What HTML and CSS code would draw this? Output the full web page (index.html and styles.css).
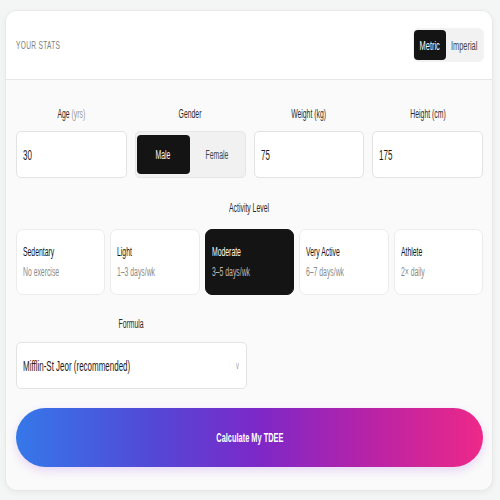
FILE: index.html
```html
<!DOCTYPE html>
<html>
<head>
<meta charset="utf-8">
<link rel="stylesheet" href="styles.css">
</head>
<body>
<div class="page">
  <div class="card">
    <div class="card-head">
      <div class="title"><span class="n">YOUR STATS</span></div>
      <div class="units">
        <span class="unit u-metric active"><span class="nc">Metric</span></span>
        <span class="unit u-imp"><span class="nc">Imperial</span></span>
      </div>
    </div>
    <div class="card-body">
      <div class="fields">
        <div class="field">
          <div class="label"><span class="nc">Age <span class="muted">(yrs)</span></span></div>
          <div class="input"><span class="n">30</span></div>
        </div>
        <div class="field">
          <div class="label"><span class="nc">Gender</span></div>
          <div class="seg">
            <span class="seg-btn active"><span class="nc">Male</span></span>
            <span class="seg-btn"><span class="nc">Female</span></span>
          </div>
        </div>
        <div class="field">
          <div class="label"><span class="nc">Weight (kg)</span></div>
          <div class="input"><span class="n">75</span></div>
        </div>
        <div class="field">
          <div class="label"><span class="nc">Height (cm)</span></div>
          <div class="input"><span class="n">175</span></div>
        </div>
      </div>

      <div class="activity">
        <div class="label label-act"><span class="nc">Activity Level</span></div>
        <div class="acts">
          <div class="act"><div class="act-t"><span class="n">Sedentary</span></div><div class="act-s"><span class="n">No exercise</span></div></div>
          <div class="act"><div class="act-t"><span class="n">Light</span></div><div class="act-s"><span class="n">1–3 days/wk</span></div></div>
          <div class="act active"><div class="act-t"><span class="n">Moderate</span></div><div class="act-s"><span class="n">3–5 days/wk</span></div></div>
          <div class="act"><div class="act-t"><span class="n">Very Active</span></div><div class="act-s"><span class="n">6–7 days/wk</span></div></div>
          <div class="act"><div class="act-t"><span class="n">Athlete</span></div><div class="act-s"><span class="n">2× daily</span></div></div>
        </div>
      </div>

      <div class="formula">
        <div class="label label-form"><span class="nc">Formula</span></div>
        <div class="select">
          <span class="n">Mifflin-St Jeor (recommended)</span>
          <span class="chev"><span class="nc">v</span></span>
        </div>
      </div>

      <div class="cta"><span class="nc">Calculate My TDEE</span></div>
    </div>
  </div>
</div>
</body>
</html>
```
FILE: styles.css
```css
* { box-sizing: border-box; }
html, body { margin: 0; padding: 0; }
body {
  background: #f4f5f5;
  font-family: "Liberation Sans", Arial, sans-serif;
  color: #111;
  width: 500px;
  height: 500px;
  overflow: hidden;
}
.n, .nc {
  display: inline-block;
  white-space: nowrap;
  transform: scaleX(0.57);
}
.n { transform-origin: left center; }
.nc { transform-origin: center center; }

.page { padding: 10px 7px 0 5px; }
.card {
  background: #fafafa;
  border: 1px solid #e8e8e8;
  border-radius: 12px;
  overflow: hidden;
  height: 481px;
  box-shadow: 0 2px 6px rgba(0,0,0,0.05);
}
.card-head {
  background: #fff;
  height: 69px;
  border-bottom: 1px solid #e6e6e6;
  display: flex;
  align-items: center;
  justify-content: space-between;
  padding: 0 8px 0 10px;
}
.title {
  font-size: 11.5px;
  letter-spacing: 0.6px;
  color: #7d7d7d;
}
.units {
  display: flex;
  background: #f2f2f2;
  border-radius: 6px;
  padding: 2px 1px;
}
.unit {
  display: flex;
  align-items: center;
  justify-content: center;
  font-size: 13px;
  color: #444;
  height: 30px;
  border-radius: 4px;
}
.u-metric { width: 32px; }
.u-imp { width: 37px; }
.unit.active { background: #141414; color: #fff; }

.card-body { padding: 28px 9px 0 10px; }
.label {
  text-align: center;
  font-size: 12px;
  color: #2a2a2a;
  line-height: 13px;
}
.muted { color: #999; }
.fields {
  display: grid;
  grid-template-columns: repeat(4, 1fr);
  gap: 8px;
}
.field .label { margin-bottom: 10px; }
.input {
  height: 47px;
  background: #fff;
  border: 1px solid #e3e3e3;
  border-radius: 5px;
  display: flex;
  align-items: center;
  padding-left: 6px;
  font-size: 14px;
  color: #1a1a1a;
}
.seg {
  height: 47px;
  background: #f1f1f1;
  border: 1px solid #e6e6e6;
  border-radius: 5px;
  display: flex;
  padding: 3px 1px;
}
.seg-btn {
  flex: 1;
  display: flex;
  align-items: center;
  justify-content: center;
  font-size: 12px;
  color: #444;
  border-radius: 4px;
}
.seg-btn.active { background: #141414; color: #fff; }

.activity { margin-top: 24px; }
.label-act { margin-bottom: 14px; }
.acts {
  display: grid;
  grid-template-columns: repeat(5, 1fr);
  gap: 5px;
}
.act {
  height: 66px;
  background: #fff;
  border: 1px solid #ececec;
  border-radius: 7px;
  padding: 15px 6px 0;
}
.act-t { font-size: 12px; color: #111; line-height: 14px; }
.act-s { font-size: 12px; color: #8a8a8a; line-height: 14px; margin-top: 6px; }
.act.active { background: #141414; border-color: #141414; }
.act.active .act-t { color: #fff; }
.act.active .act-s { color: #bdbdbd; }

.formula { margin-top: 23px; width: 231px; }
.label-form { margin-bottom: 11px; }
.select {
  height: 47px;
  background: #fff;
  border: 1px solid #e3e3e3;
  border-radius: 5px;
  display: flex;
  align-items: center;
  justify-content: space-between;
  padding: 0 6px 0 6px;
  font-size: 14px;
  color: #1a1a1a;
}
.chev { font-size: 10px; color: #999; }

.cta {
  margin-top: 19px;
  height: 59px;
  border-radius: 30px;
  background: linear-gradient(90deg, #3578ea 0%, #5447d6 30%, #7d28c8 52%, #b623a8 75%, #ee2888 100%);
  color: #fff;
  font-weight: bold;
  font-size: 13px;
  display: flex;
  align-items: center;
  justify-content: center;
  box-shadow: 0 4px 10px rgba(150, 60, 220, 0.18);
}
```
